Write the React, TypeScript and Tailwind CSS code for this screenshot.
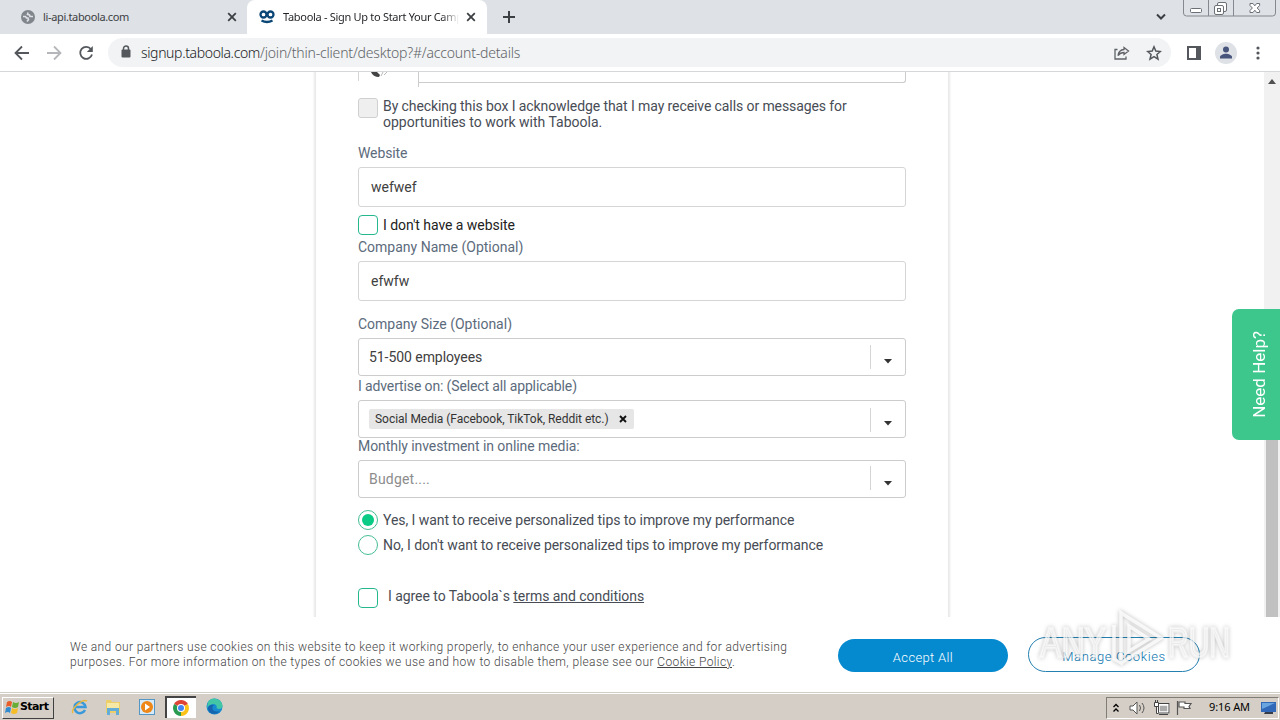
import type { ReactNode } from 'react';

function BrowserTabs() {
  return (
    <div className="flex h-[34px] bg-[#dee1e6] font-['Noto_Sans',sans-serif] text-[11px] leading-[16px] text-[#3c4043]">
      <div className="flex h-[34px] w-[247px] shrink-0 items-center pl-[21px]">
        <svg width="14" height="14" viewBox="0 0 14 14" className="shrink-0">
          <circle cx="7" cy="7" r="7" fill="#80868b" />
          <path d="M2 6.500h2.500l1 1.500H7l.5 1.500-1.500 2M7 2.500 6.500 4.500l2 .5.500 1.500H12" fill="none" stroke="#dee1e6" strokeWidth="1.600" />
        </svg>
        <span className="ml-[8px] w-[184px] whitespace-nowrap tracking-[-0.35px]">li-api.taboola.com</span>
        <TabClose />
      </div>
      <div className="flex h-[34px] w-[240px] shrink-0 items-center rounded-t-[8px] bg-white pl-[12px]">
        <svg width="16" height="14" viewBox="0 0 16 14" className="shrink-0" fill="none" stroke="#0b4776">
          <circle cx="4.500" cy="4.500" r="3" strokeWidth="2.300" />
          <circle cx="11.500" cy="4.500" r="3" strokeWidth="2.300" />
          <path d="M2.500 10.500Q8 13.500 13.500 10.500" strokeWidth="2.300" />
        </svg>
        <span className="ml-[8px] w-[176px] shrink-0 whitespace-nowrap bg-gradient-to-r from-[#202124] from-90% to-white bg-clip-text tracking-[-0.3px] text-transparent">
          Taboola - Sign Up to Start Your Camp
        </span>
        <div className="ml-[7px] shrink-0">
          <TabClose />
        </div>
      </div>
      <svg width="14" height="14" viewBox="0 0 14 14" className="ml-[15px] mt-[10px]">
        <path d="M7 1v12M1 7h12" stroke="#3c4043" strokeWidth="2" />
      </svg>
      <div className="ml-auto flex">
        <svg width="12" height="8" viewBox="0 0 12 8" className="mr-[16px] mt-[13px]">
          <path d="M2 1.500 6 5.500 10 1.500" fill="none" stroke="#3c4043" strokeWidth="2" />
        </svg>
        <svg width="97" height="18" viewBox="0 0 97 18" fill="none" stroke="#6b6f76">
          <path d="M.5 0v13a3 3 0 0 0 3 3h86a3 3 0 0 0 3-3V0M25.500 0v16M50.500 0v16" stroke="#85888e" />
          <rect x="7.500" y="8.500" width="11" height="4" rx="1" fill="#fff" />
          <rect x="34.500" y="2.500" width="9" height="9" rx="1.500" fill="#fff" />
          <rect x="31.500" y="5.500" width="9" height="9" rx="1.500" fill="#fff" />
          <rect x="34.500" y="8.500" width="3" height="3" />
          <path d="M67 3.500h3l1.800 2.300 1.800-2.300h3v2L74.200 8l2.400 2.500v2h-3l-1.800-2.300L70 12.500h-3v-2L69.400 8 67 5.500z" fill="#fff" />
        </svg>
      </div>
    </div>
  );
}

function TabClose() {
  return (
    <svg width="10" height="10" viewBox="0 0 10 10" className="shrink-0">
      <path d="m1.200 1.200 7.600 7.600M8.800 1.200 1.200 8.800" stroke="#3c4043" strokeWidth="1.800" />
    </svg>
  );
}

function Toolbar() {
  return (
    <div className="flex h-[38px] items-center border-b border-[#d5d7da] bg-white">
      <svg width="80" height="16" viewBox="0 0 80 16" fill="none" strokeWidth="1.800" className="ml-[14px] shrink-0">
        <path d="M15 8H2M8 1.500 1.500 8 8 14.500" stroke="#54585d" />
        <path d="M33 8h13M40 1.500 46.500 8l-6.500 6.500" stroke="#b5b7ba" />
        <path d="M77 4.200A6 6 0 1 0 78 9.500" stroke="#54585d" />
        <path d="M78.800 1v6h-6z" fill="#54585d" />
      </svg>
      <div className="ml-[14px] flex h-[29px] w-[1063px] shrink-0 items-center rounded-full bg-[#f1f3f4] pl-[13px] pr-[9px]">
        <svg width="10" height="13" viewBox="0 0 10 13" className="mt-[-2px]">
          <path d="M2.500 5V3.500a2.500 2.500 0 0 1 5 0V5" fill="none" stroke="#54585d" strokeWidth="1.500" />
          <rect x="0.500" y="4.500" width="9" height="8" rx="1" fill="#54585d" />
        </svg>
        <div className="ml-[10px] whitespace-nowrap font-['Noto_Sans',sans-serif] text-[14px] font-light tracking-[-0.19px] text-[#5f6368]">
          <span className="tracking-[-0.36px] text-[#202124]">signup.taboola.com</span>/join/thin-client/desktop?#/account-details
        </div>
        <svg width="16" height="16" viewBox="0 0 16 16" fill="none" stroke="#5f6368" strokeWidth="1.300" className="ml-auto">
          <path d="M3.500 4.500h-2.500v9.500h11v-2.500" />
          <path d="M10 2.500 14.500 6 10 9.500V7.500C7.500 7.500 5.500 8.500 4 10.500 4.500 7 6.500 4.800 10 4.500z" />
        </svg>
        <svg width="16" height="16" viewBox="0 0 16 16" className="ml-[16px]">
          <path d="m8 1.800 1.800 4.300 4.600.4-3.500 3 1.100 4.600L8 11.700l-4 2.400 1.100-4.600-3.500-3 4.600-.4z" fill="none" stroke="#54585d" strokeWidth="1.500" />
        </svg>
      </div>
      <svg width="14" height="14" viewBox="0 0 14 14" className="ml-[16px]">
        <path d="M1 1h12v12H1z" fill="none" stroke="#54585d" strokeWidth="2" />
        <path d="M9 1h4v12H9z" fill="#54585d" />
      </svg>
      <svg width="22" height="22" viewBox="0 0 22 22" className="ml-[14px]">
        <circle cx="11" cy="11" r="11" fill="#dee1e6" />
        <circle cx="11" cy="7.500" r="3" fill="#47547b" />
        <path d="M5 16.500v-1.500c0-2 3.500-3.300 6-3.300s6 1.300 6 3.300v1.500z" fill="#47547b" />
      </svg>
      <svg width="4" height="14" viewBox="0 0 4 14" fill="#54585d" className="ml-[19px]">
        <circle cx="2" cy="2" r="1.600" />
        <circle cx="2" cy="7" r="1.600" />
        <circle cx="2" cy="12" r="1.600" />
      </svg>
    </div>
  );
}

function FieldLabel({ children, className }: { children: ReactNode; className: string }) {
  return <div className={`h-[16px] whitespace-nowrap leading-[16px] text-[#5c6b7c] ${className}`}>{children}</div>;
}

function Select({ children, separator }: { children: ReactNode; separator: string }) {
  return (
    <div className="flex h-[38px] items-start rounded-[3px] border border-[#cccccc] pl-[10px]">
      <div className="flex h-[36px] items-center">{children}</div>
      <div className={`ml-auto h-[24px] w-px bg-[#d5d5d5] ${separator}`} />
      <svg width="8" height="5" viewBox="0 0 8 5" className="ml-[13px] mr-[13px] mt-[20px]">
        <path d="M0 0h8L4 4.500z" fill="#333" />
      </svg>
    </div>
  );
}

function Checkbox() {
  return <div className="h-[20px] w-[20px] shrink-0 rounded-[4px] border border-[#25b78d]" />;
}

function Radio({ checked }: { checked?: boolean }) {
  return (
    <div className="flex h-[20px] w-[20px] shrink-0 items-center justify-center rounded-full border border-[#45bd94]">
      {checked && <div className="h-[12px] w-[12px] rounded-full bg-[#09cb86]" />}
    </div>
  );
}

function SignupForm() {
  return (
    <div className="ml-[316px] h-[545px] w-[632px] bg-white px-[42px] text-[14px] text-[#474c55] shadow-[0_0_2px_2px_#e8e8e8]">
      <div className="flex h-[16px]">
        <div className="h-[9px] w-[60px] overflow-hidden border-l border-[#d5d5d5] pl-[11px]">
          <svg width="20" height="8" viewBox="0 0 20 8">
            <path d="M1 0q2 5 8 5l1-2-3-3z" fill="#444" />
            <path d="m11 4 2-4M14 3l3-3" stroke="#bbb" />
          </svg>
        </div>
        <div className="h-[15px] w-px bg-[#ccc]" />
        <div className="h-[11px] w-[487px] rounded-br-[3px] border-b border-r border-[#ccc]" />
      </div>
      <div className="mt-[10px] flex">
        <div className="h-[20px] w-[20px] shrink-0 rounded-[3px] border border-[#d0d0d0] bg-[#efefef]" />
        <div className="ml-[5px] whitespace-nowrap leading-[16px]">
          <p className="tracking-[-0.093px]">By checking this box I acknowledge that I may receive calls or messages for</p>
          <p>opportunities to work with Taboola.</p>
        </div>
      </div>
      <FieldLabel className="mt-[15px] tracking-[-0.1px]">Website</FieldLabel>
      <div className="mt-[6px] flex h-[40px] items-center rounded-[3px] border border-[#d5d5d5] pl-[12px] text-[#404040]">wefwef</div>
      <div className="mt-[8px] flex items-center text-[#222]">
        <Checkbox />
        <span className="ml-[5px] leading-[20px] tracking-[-0.05px]">I don't have a website</span>
      </div>
      <FieldLabel className="mt-[4px]">Company Name (Optional)</FieldLabel>
      <div className="mt-[6px] flex h-[40px] items-center rounded-[3px] border border-[#d5d5d5] pl-[12px] text-[#404040]">efwfw</div>
      <FieldLabel className="mt-[15px]">Company Size (Optional)</FieldLabel>
      <div className="mt-[6px]">
        <Select separator="mt-[6px]">
          <span className="tracking-[-0.06px] text-[#404040]">51-500 employees</span>
        </Select>
      </div>
      <FieldLabel className="mt-[2px] tracking-[-0.13px]">I advertise on: (Select all applicable)</FieldLabel>
      <div className="mt-[6px]">
        <Select separator="mt-[7px]">
          <div className="flex h-[20px] w-[265px] items-center rounded-[2px] bg-[#e6e6e6] pl-[6px] text-[12px] text-[#333]">
            <span className="whitespace-nowrap tracking-[-0.03px]">Social Media (Facebook, TikTok, Reddit etc.)</span>
            <svg width="8" height="8" viewBox="0 0 8 8" className="ml-auto mr-[7px]">
              <path d="m1 1 6 6M7 1 1 7" stroke="#111" strokeWidth="1.900" />
            </svg>
          </div>
        </Select>
      </div>
      <FieldLabel className="tracking-[-0.07px]">Monthly investment in online media:</FieldLabel>
      <div className="mt-[6px]">
        <Select separator="mt-[5px]">
          <span className="tracking-[0.2px] text-[#8c8c8c]">Budget....</span>
        </Select>
      </div>
      <div className="mt-[12px] flex items-center">
        <Radio checked />
        <span className="ml-[5px] whitespace-nowrap leading-[20px] tracking-[-0.06px]">Yes, I want to receive personalized tips to improve my performance</span>
      </div>
      <div className="mt-[5px] flex items-center">
        <Radio />
        <span className="ml-[5px] whitespace-nowrap leading-[20px] tracking-[-0.055px]">No, I don't want to receive personalized tips to improve my performance</span>
      </div>
      <div className="mt-[33px] flex">
        <Checkbox />
        <span className="ml-[10px] whitespace-nowrap leading-[16px] tracking-[-0.05px]">
          I agree to Taboola`s <a className="underline">terms and conditions</a>
        </span>
      </div>
    </div>
  );
}

function CookieBanner() {
  return (
    <div className="flex h-[75px] bg-white pl-[70px]">
      <p className="mt-[23px] w-[768px] shrink-0 whitespace-nowrap text-[12px] leading-[15px] font-light text-[#444]">
        <span className="tracking-[0.367px]">We and our partners use cookies on this website to keep it working properly, to enhance your user experience and for advertising</span>
        <br />
        <span className="tracking-[0.395px]">
          purposes. For more information on the types of cookies we use and how to disable them, please see our <a className="underline">Cookie Policy</a>.
        </span>
      </p>
      <button className="mt-[22px] h-[33px] w-[170px] rounded-full bg-[#0589cf] pt-[5px] text-[13px] font-light tracking-[0.35px] text-white">Accept All</button>
      <button className="ml-[20px] mt-[20px] h-[35px] w-[172px] rounded-full border border-[#2380b0] pt-[5px] text-[13px] font-light tracking-[0.6px] text-[#0b76b0]">
        Manage Cookies
      </button>
    </div>
  );
}

function Watermark() {
  return (
    <svg width="212" height="68" viewBox="0 0 212 68" className="absolute left-[1034px] top-[606px] drop-shadow-[0_0_2px_#0005]" fill="none">
      <g fontFamily="Liberation Sans, sans-serif" fontSize="42" fill="#fff" fillOpacity="0.500" stroke="#fff" strokeOpacity="0.600" strokeWidth="2.500">
        <text x="6" y="51" textLength="66" lengthAdjust="spacingAndGlyphs">ANY</text>
        <text x="134" y="51" textLength="62" lengthAdjust="spacingAndGlyphs">RUN</text>
      </g>
      <path d="M80 19v34l7 4V7l40 25-40 25M95 20v25l20-12z" stroke="#fff" strokeOpacity="0.800" strokeWidth="3.500" />
    </svg>
  );
}

function Taskbar() {
  return (
    <div className="flex h-[28px] items-center border-t border-[#d0cdc5] bg-[#d5cec6] font-['Noto_Sans',sans-serif] text-[11px] text-black shadow-[inset_0_1px_#fff]">
      <div className="ml-[2px] mt-[2px] flex h-[22px] w-[52px] items-center border border-b-[#404040] border-l-white border-r-[#404040] border-t-white pl-[2px]">
        <svg width="15" height="15" viewBox="0 0 15 15" className="shrink-0">
          <path d="M2 2q3-2 5 0L6 7Q4 5 1 7z" fill="#e95d29" />
          <path d="M8 2q3 2 6 0l-1 5q-3 2-6 0z" fill="#68ad35" />
          <path d="M1 8q3-2 5 0l-1 5q-2-2-5 0z" fill="#318bd0" />
          <path d="M7 8q3 2 6 0l-1 5q-3 2-6 0z" fill="#f5bd27" />
        </svg>
        <span className="font-['DejaVu_Sans',sans-serif] text-[11px] font-bold tracking-[-0.6px]">Start</span>
      </div>
      <svg width="18" height="18" viewBox="0 0 18 18" fill="none" className="ml-[17px]">
        <path d="M14 12a5.500 5.500 0 1 1 .5-3H5" stroke="#3999da" strokeWidth="2.500" />
        <path d="M2 15C-1 12 11 0 16 3" stroke="#e9b83c" strokeWidth="1.500" />
      </svg>
      <svg width="18" height="18" viewBox="0 0 18 18" className="ml-[15px]">
        <path d="M2 2h5l1 2h8v11H2z" fill="#eccf68" />
        <path d="M3 5h12v6H3z" fill="#f7e9a5" />
        <path d="M3 17v-7h12v7h-3v-4H6v4z" fill="#64add7" />
      </svg>
      <svg width="16" height="16" viewBox="0 0 16 16" className="ml-[17px]">
        <rect x=".5" y=".5" width="15" height="15" fill="#d6ebf7" stroke="#5496c4" />
        <circle cx="8" cy="8" r="6" fill="#ef8618" />
        <path d="m6 4.500 5 3.500-5 3.500z" fill="#fff" />
      </svg>
      <div className="ml-[10px] mt-[1px] flex h-[22px] w-[31px] items-center justify-center border-l-2 border-t-2 border-[#444] bg-white">
        <svg width="16" height="16" viewBox="0 0 16 16" className="mr-[2px]">
          <path d="M8 8 1.100 4A8 8 0 0 1 14.900 4z" fill="#de4436" />
          <path d="M8 8 14.900 4A8 8 0 0 1 8 16z" fill="#fbc318" />
          <path d="M8 8v8A8 8 0 0 1 1.100 4z" fill="#289b50" />
          <circle cx="8" cy="8" r="4" fill="#fff" />
          <circle cx="8" cy="8" r="3" fill="#4285f4" />
        </svg>
      </div>
      <svg width="17" height="17" viewBox="0 0 17 17" className="ml-[10px]">
        <circle cx="8.500" cy="8.500" r="8" fill="#178bd0" />
        <path d="M2 4a8 8 0 0 1 14.500 4c0 3-4 4-6 2 1-2-1-4-3-4S3 7 1 10z" fill="#42c6a5" />
        <path d="M7 8c-2 3 1 7 7 5-4 5-12 3-12-3 1-3 3-4 6-3z" fill="#1664ad" />
      </svg>
      <div className="ml-auto mr-px mt-[2px] flex h-[22px] w-[173px] items-center border border-b-white border-l-[#807d77] border-r-white border-t-[#807d77] pl-[6px]">
        <svg width="6" height="10" viewBox="0 0 6 10" fill="none" stroke="#000" strokeWidth="1.300">
          <path d="m.5 4 2.500-2.500L5.500 4M.5 8.500 3 6l2.500 2.500" />
        </svg>
        <svg width="17" height="14" viewBox="0 0 17 14" fill="none" stroke="#555" className="ml-[10px]">
          <path d="M1 5v4h3l4 4V1L4 5z" fill="#fff" />
          <path d="M10.500 4q2 3 0 6M13 2q4 5 0 10" />
        </svg>
        <svg width="17" height="16" viewBox="0 0 17 16" fill="none" stroke="#444" className="ml-[7px]">
          <rect x="5.500" y="4.500" width="10" height="8" fill="#aaa" stroke="#fff" strokeWidth="2.500" />
          <rect x="5.500" y="3.500" width="10.500" height="9.500" />
          <path d="M6 14.500h9" />
          <path d="M1.500 2.500v4h4v-4zM2.500 0v2M4.500 0v2M3.500 7v6.500h2" fill="#fff" />
        </svg>
        <svg width="17" height="15" viewBox="0 0 17 15" stroke="#555" className="ml-[6px]">
          <path d="M1.500 1v14M3 2h6v1.500h6l-2 3 1 2H8V7H3z" fill="#fff" strokeWidth="1.200" />
        </svg>
        <span className="ml-auto whitespace-nowrap tracking-[-0.1px]">9:16 AM</span>
        <svg width="16" height="14" viewBox="0 0 16 14" className="ml-[10px] mr-[2px]">
          <path d="M1 1h15v10H1z" fill="#3268b8" />
          <path d="M2 2h13L2 8z" fill="#6ba5e0" />
          <path d="M5 11h8v2H4z" fill="#353d4b" />
        </svg>
      </div>
    </div>
  );
}

export default function App() {
  return (
    <div className="relative h-[720px] w-[1280px] overflow-hidden bg-white font-[Roboto,sans-serif]">
      <BrowserTabs />
      <Toolbar />
      <div className="flex h-[545px] overflow-hidden">
        <SignupForm />
        <div className="ml-auto flex w-[16px] flex-col items-center bg-[#f1f1f1]">
          <svg width="8" height="5" viewBox="0 0 8 5" className="mt-[7px]">
            <path d="M0 5h8L4 0z" fill="#505050" />
          </svg>
          <div className="mb-0 mt-auto h-[250px] w-[12px] bg-[#c1c1c1]" />
        </div>
      </div>
      <CookieBanner />
      <Taskbar />
      <div className="absolute left-[1232px] top-[309px] flex h-[131px] w-[48px] items-center justify-center rounded-l-[7px] bg-[#3dc78d]">
        <span className="ml-[7px] rotate-180 whitespace-nowrap text-[17px] text-white [writing-mode:vertical-rl]">Need Help?</span>
      </div>
      <Watermark />
    </div>
  );
}
